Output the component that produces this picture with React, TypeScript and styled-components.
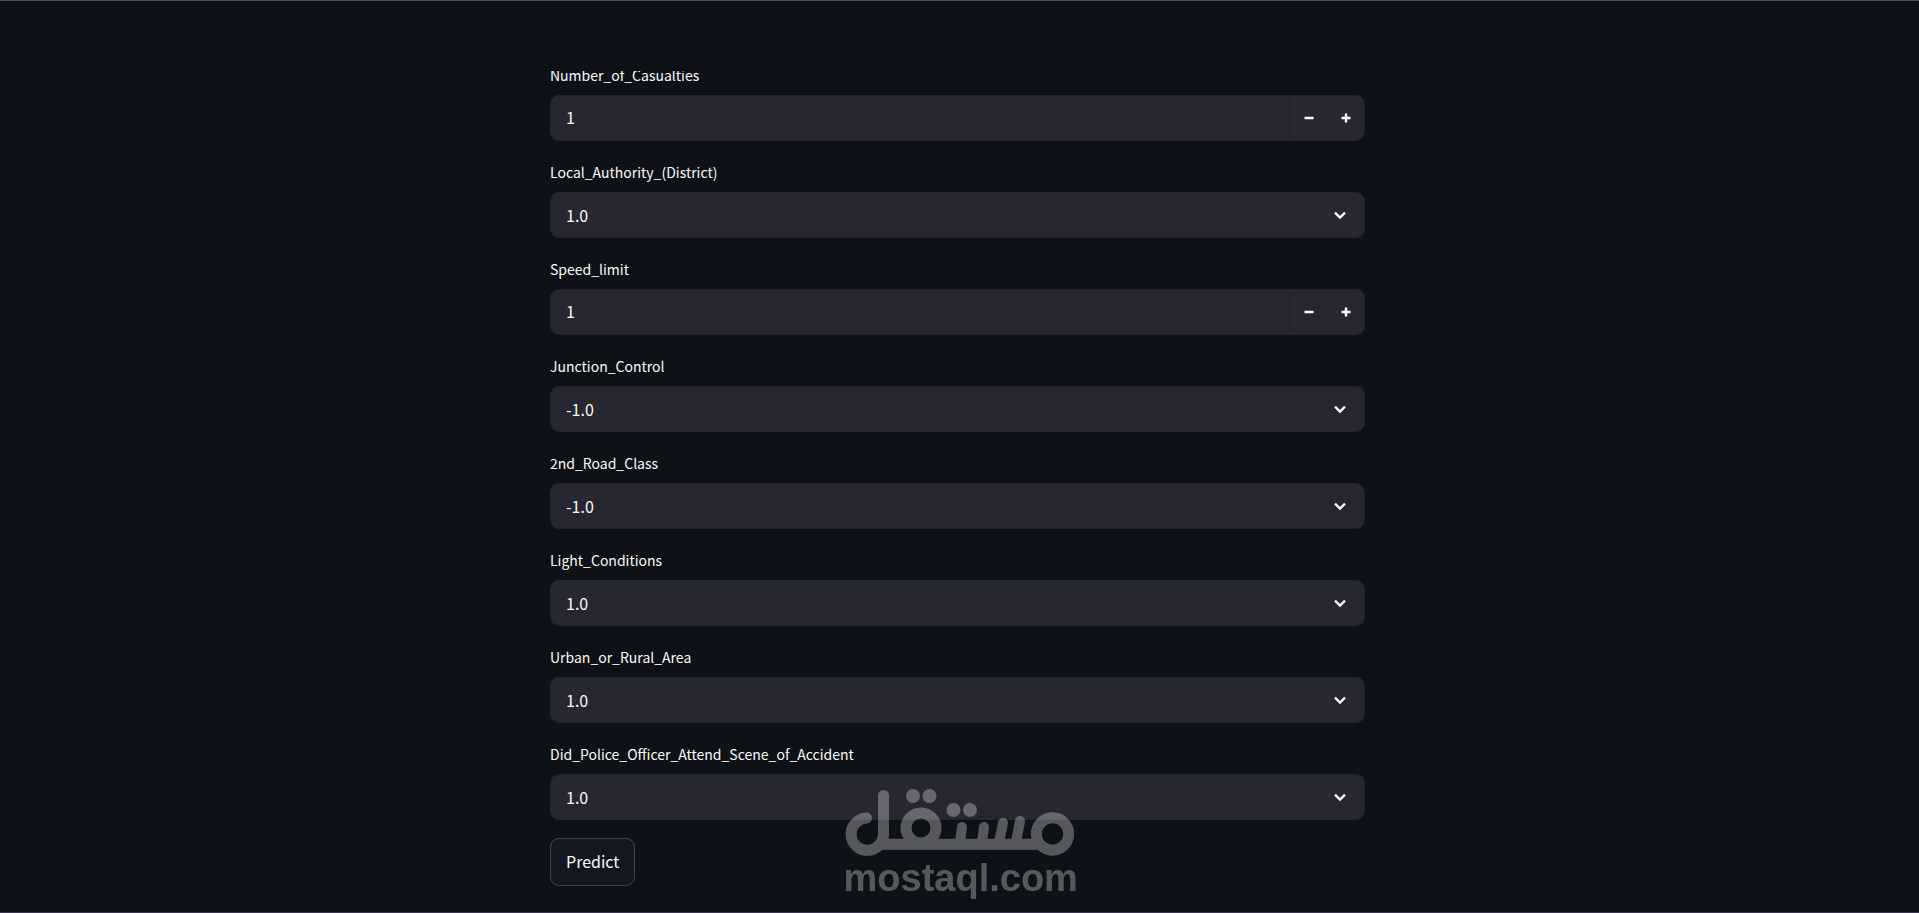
import React, { useState } from "react";
import styled, { createGlobalStyle } from "styled-components";

const GlobalStyle = createGlobalStyle`
  *, *::before, *::after { box-sizing: border-box; }
  html, body { margin: 0; height: 100%; }
  body {
    background: #0e1117;
    color: #fafafa;
    font-family: "Noto Sans CJK SC", "Noto Sans", sans-serif;
    font-size: 16px;
    overflow: hidden;
  }
  #root { height: 100%; }
  button, input, select { font: inherit; color: inherit; }
`;

const Page = styled.div`
  height: 100%;
  overflow: hidden;
  border-top: 1px solid #454a4b;
  border-bottom: 1px solid #3c3650;
`;

const Header = styled.header`
  position: fixed;
  top: 1px;
  left: 0;
  right: 0;
  height: 70px;
  background: #0e1117;
  z-index: 1;
`;

const Form = styled.form`
  display: flex;
  flex-direction: column;
  align-items: stretch;
  gap: 18px;
  width: calc(100% - 36px);
  max-width: 815px;
  margin: 0 auto;
  padding-top: 61px;
  position: relative;
  left: -2px;
`;

const Field = styled.div`
  display: flex;
  flex-direction: column;
  gap: 7px;
`;

const Label = styled.label`
  font-size: 14px;
  line-height: 26px;
`;

const Box = styled.div`
  position: relative;
  display: flex;
  align-items: stretch;
  height: 46px;
  border: 1px solid #22232c;
  border-radius: 9px;
  background: #262730;
  overflow: hidden;
`;

const NumberInput = styled.input`
  flex: 1;
  min-width: 0;
  padding: 0 15px 2px;
  border: 0;
  outline: 0;
  background: transparent;
`;

const Select = styled.select`
  flex: 1;
  min-width: 0;
  padding: 0 15px;
  border: 0;
  outline: 0;
  appearance: none;
  background: transparent;
`;

const Stepper = styled.div`
  display: flex;
  border-left: 1px solid #1f2028;
`;

const StepButton = styled.button`
  display: grid;
  place-items: center;
  width: 37px;
  padding: 0;
  border: 0;
  background: transparent;
`;

const Chevron = styled.svg`
  position: absolute;
  right: 15px;
  top: 50%;
  transform: translateY(-50%);
  pointer-events: none;
`;

const Submit = styled.button`
  align-self: flex-start;
  height: 48px;
  padding: 0 15px 2px;
  border: 1px solid #43454a;
  border-radius: 9px;
  background: #131720;
`;

const Watermark = styled.div`
  position: fixed;
  left: 50%;
  bottom: 15px;
  width: 232px;
  margin-left: -116px;
  color: #ffffff;
  opacity: 0.3;
  pointer-events: none;
  z-index: 2;
`;

const Brand = styled.div`
  font: bold 38px/40px "Liberation Sans", Arial, sans-serif;
  text-align: center;
`;

type FieldSpec = { name: string; kind: "number" | "select"; value: string };

const fields: FieldSpec[] = [
  { name: "Number_of_Casualties", kind: "number", value: "1" },
  { name: "Local_Authority_(District)", kind: "select", value: "1.0" },
  { name: "Speed_limit", kind: "number", value: "1" },
  { name: "Junction_Control", kind: "select", value: "-1.0" },
  { name: "2nd_Road_Class", kind: "select", value: "-1.0" },
  { name: "Light_Conditions", kind: "select", value: "1.0" },
  { name: "Urban_or_Rural_Area", kind: "select", value: "1.0" },
  { name: "Did_Police_Officer_Attend_Scene_of_Accident", kind: "select", value: "1.0" },
];

function NumberField({ name, value }: { name: string; value: string }) {
  const [current, setCurrent] = useState(value);
  const step = (delta: number) => setCurrent(String(Number(current) + delta));
  return (
    <Box>
      <NumberInput
        id={name}
        inputMode="numeric"
        value={current}
        onChange={(e) => setCurrent(e.target.value)}
      />
      <Stepper>
        <StepButton type="button" aria-label="Decrease" onClick={() => step(-1)}>
          <svg width="10" height="10" viewBox="0 0 10 10">
            <path d="M0.5 5h9" stroke="#fafafa" strokeWidth="2.4" />
          </svg>
        </StepButton>
        <StepButton type="button" aria-label="Increase" onClick={() => step(1)}>
          <svg width="10" height="10" viewBox="0 0 10 10">
            <path d="M0.5 5h9M5 0.5v9" stroke="#fafafa" strokeWidth="2.4" />
          </svg>
        </StepButton>
      </Stepper>
    </Box>
  );
}

function SelectField({ name, value }: { name: string; value: string }) {
  return (
    <Box>
      <Select id={name} defaultValue={value}>
        <option value={value}>{value}</option>
      </Select>
      <Chevron width="18" height="18" viewBox="0 0 18 18" fill="none">
        <path d="M4 6.6l5 5 5-5" stroke="#fafafa" strokeWidth="2.3" />
      </Chevron>
    </Box>
  );
}

function Logo() {
  return (
    <svg width="232" height="70" viewBox="0 0 232 70" fill="none" stroke="currentColor" display="block">
      <path
        d="M22.5 30A16.2 16.2 0 1 0 39.5 46V7.5"
        strokeWidth="11"
        strokeLinecap="round"
      />
      <path d="M33 56.2H196" strokeWidth="11" />
      <circle cx="77" cy="40" r="15" strokeWidth="11" />
      <circle cx="208.500" cy="46" r="16.200" strokeWidth="11" />
      <path d="M116 54l2-15M138 54l2-15M155 54l4-19M172 54l4-21" strokeWidth="10" strokeLinecap="round" />
      <g fill="currentColor" stroke="none">
        <circle cx="69" cy="8" r="7" />
        <circle cx="85.500" cy="8" r="7" />
        <circle cx="109.500" cy="22" r="7" />
        <circle cx="126" cy="22" r="7" />
      </g>
    </svg>
  );
}

export default function App() {
  return (
    <Page>
      <GlobalStyle />
      <Header />
      <Form onSubmit={(e) => e.preventDefault()}>
        {fields.map((field) => (
          <Field key={field.name}>
            <Label htmlFor={field.name}>{field.name}</Label>
            {field.kind === "number" ? (
              <NumberField name={field.name} value={field.value} />
            ) : (
              <SelectField name={field.name} value={field.value} />
            )}
          </Field>
        ))}
        <Submit type="submit">Predict</Submit>
      </Form>
      <Watermark>
        <Logo />
        <Brand>mostaql.com</Brand>
      </Watermark>
    </Page>
  );
}
